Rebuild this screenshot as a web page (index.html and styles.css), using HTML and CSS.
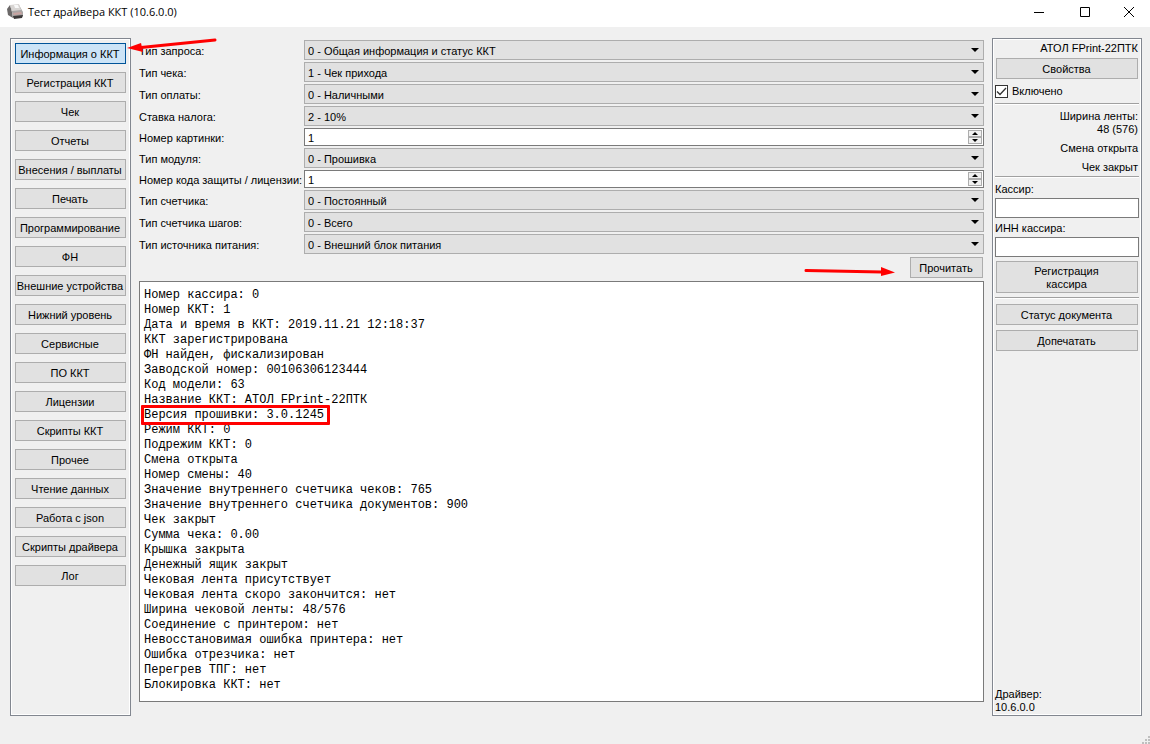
FILE: index.html
```html
<!DOCTYPE html>
<html lang="ru">
<head>
<meta charset="utf-8">
<title>Тест драйвера ККТ (10.6.0.0)</title>
<link rel="stylesheet" href="styles.css">
</head>
<body>
<div class="window">
  <header class="titlebar">
    <svg class="app-icon" width="17" height="16" viewBox="0 0 17 16" aria-hidden="true">
      <path d="M0 5L3 1L5 8L6 14L1 11Z" fill="#6b6868"/>
      <path d="M3 1L12 1L16 8L16 12L14 14L6 14L5 8Z" fill="#aaa6a5"/>
      <path d="M3 1L12 0L14 6L5 7Z" fill="#d8d5d3"/>
      <path d="M7 1L11 1L12 4L8 4Z" fill="#f8f8f8"/>
      <path d="M6 9L14 8L15 10L7 11Z" fill="#c9a3a1"/>
      <path d="M6 12L16 11L15 14L7 15Z" fill="#3c3939"/>
    </svg>
    <h1 class="title">Тест драйвера ККТ (10.6.0.0)</h1>
    <div class="caption">
      <button type="button" class="caption-btn" aria-label="Свернуть"><svg width="12" height="12" viewBox="0 0 12 12"><path d="M1 6.5h10" stroke="#000" fill="none"/></svg></button>
      <button type="button" class="caption-btn" aria-label="Развернуть"><svg width="12" height="12" viewBox="0 0 12 12"><path d="M1.5 1.5h9v9h-9z" stroke="#000" fill="none"/></svg></button>
      <button type="button" class="caption-btn" aria-label="Закрыть"><svg width="12" height="12" viewBox="0 0 12 12"><path d="M1 1l10 10M11 1L1 11" stroke="#000" fill="none"/></svg></button>
    </div>
  </header>

  <main class="content">
    <nav class="panel nav">
      <button type="button" class="btn btn-active">Информация о ККТ</button>
      <button type="button" class="btn">Регистрация ККТ</button>
      <button type="button" class="btn">Чек</button>
      <button type="button" class="btn">Отчеты</button>
      <button type="button" class="btn">Внесения / выплаты</button>
      <button type="button" class="btn">Печать</button>
      <button type="button" class="btn">Программирование</button>
      <button type="button" class="btn">ФН</button>
      <button type="button" class="btn">Внешние устройства</button>
      <button type="button" class="btn">Нижний уровень</button>
      <button type="button" class="btn">Сервисные</button>
      <button type="button" class="btn">ПО ККТ</button>
      <button type="button" class="btn">Лицензии</button>
      <button type="button" class="btn">Скрипты ККТ</button>
      <button type="button" class="btn">Прочее</button>
      <button type="button" class="btn">Чтение данных</button>
      <button type="button" class="btn">Работа с json</button>
      <button type="button" class="btn">Скрипты драйвера</button>
      <button type="button" class="btn">Лог</button>
    </nav>

    <section class="center">
      <form class="form">
        <label for="f1">Тип запроса:</label>
        <div class="combo"><select id="f1"><option>0 - Общая информация и статус ККТ</option></select></div>
        <label for="f2">Тип чека:</label>
        <div class="combo"><select id="f2"><option>1 - Чек прихода</option></select></div>
        <label for="f3">Тип оплаты:</label>
        <div class="combo"><select id="f3"><option>0 - Наличными</option></select></div>
        <label for="f4">Ставка налога:</label>
        <div class="combo"><select id="f4"><option>2 - 10%</option></select></div>
        <label for="f5">Номер картинки:</label>
        <div class="spin"><input id="f5" type="number" value="1"><div class="steps"><button type="button" class="step step-up" aria-label="Больше"></button><button type="button" class="step step-down" aria-label="Меньше"></button></div></div>
        <label for="f6">Тип модуля:</label>
        <div class="combo"><select id="f6"><option>0 - Прошивка</option></select></div>
        <label for="f7">Номер кода защиты / лицензии:</label>
        <div class="spin"><input id="f7" type="number" value="1"><div class="steps"><button type="button" class="step step-up" aria-label="Больше"></button><button type="button" class="step step-down" aria-label="Меньше"></button></div></div>
        <label for="f8">Тип счетчика:</label>
        <div class="combo"><select id="f8"><option>0 - Постоянный</option></select></div>
        <label for="f9">Тип счетчика шагов:</label>
        <div class="combo"><select id="f9"><option>0 - Всего</option></select></div>
        <label for="f10">Тип источника питания:</label>
        <div class="combo"><select id="f10"><option>0 - Внешний блок питания</option></select></div>
      </form>
      <div class="actions">
        <button type="button" class="btn read">Прочитать</button>
        <svg class="read-arrow" width="92" height="12" viewBox="0 0 92 12" aria-hidden="true"><path d="M2 4.500L78 6" stroke="#f00" stroke-width="3" stroke-linecap="round"/><path d="M77 1L91 6.500L77 10Z" fill="#f00"/></svg>
      </div>
      <div class="log">
        <textarea readonly aria-label="Результат" spellcheck="false">Номер кассира: 0
Номер ККТ: 1
Дата и время в ККТ: 2019.11.21 12:18:37
ККТ зарегистрирована
ФН найден, фискализирован
Заводской номер: 00106306123444
Код модели: 63
Название ККТ: АТОЛ FPrint-22ПТК
Версия прошивки: 3.0.1245
Режим ККТ: 0
Подрежим ККТ: 0
Смена открыта
Номер смены: 40
Значение внутреннего счетчика чеков: 765
Значение внутреннего счетчика документов: 900
Чек закрыт
Сумма чека: 0.00
Крышка закрыта
Денежный ящик закрыт
Чековая лента присутствует
Чековая лента скоро закончится: нет
Ширина чековой ленты: 48/576
Соединение с принтером: нет
Невосстановимая ошибка принтера: нет
Ошибка отрезчика: нет
Перегрев ТПГ: нет
Блокировка ККТ: нет</textarea>
        <div class="highlight"></div>
      </div>
    </section>

    <aside class="panel side">
      <p class="right">АТОЛ FPrint-22ПТК</p>
      <button type="button" class="btn inset props">Свойства</button>
      <label class="check"><input type="checkbox" checked><svg width="13" height="13" viewBox="0 0 13 13" aria-hidden="true"><path d="M2 6.500L5 9.500L11 3" fill="none" stroke="#333" stroke-width="1.300"/></svg>Включено</label>
      <hr>
      <p class="right tape">Ширина ленты:<br>48 (576)</p>
      <p class="right state">Смена открыта</p>
      <p class="right state">Чек закрыт</p>
      <hr class="tight">
      <label class="field-label" for="cashier">Кассир:</label>
      <input class="text" id="cashier" type="text">
      <label class="field-label" for="inn">ИНН кассира:</label>
      <input class="text" id="inn" type="text">
      <button type="button" class="btn inset tall">Регистрация<br>кассира</button>
      <hr>
      <button type="button" class="btn inset status">Статус документа</button>
      <button type="button" class="btn inset print">Допечатать</button>
      <p class="driver">Драйвер:<br>10.6.0.0</p>
    </aside>
  </main>

  <svg class="nav-arrow" width="92" height="20" viewBox="0 0 92 20" aria-hidden="true"><path d="M14 12.500L88 5" stroke="#f00" stroke-width="3" stroke-linecap="round"/><path d="M0 13L14 8L16 17Z" fill="#f00"/></svg>
  <svg class="grip" width="8" height="8" viewBox="0 0 8 8" aria-hidden="true"><path d="M6 0h2v2h-2zM3 3h2v2h-2zM6 3h2v2h-2zM0 6h2v2h-2zM3 6h2v2h-2zM6 6h2v2h-2z" fill="#bfbfbf"/></svg>
</div>
</body>
</html>
```

FILE: styles.css
```css
* { box-sizing: border-box; }
body {
  margin: 0;
  background: #f0f0f0;
  color: #000;
  font: 11px/13px "Liberation Sans", Arial, sans-serif;
}
button, input, select { font: inherit; color: inherit; margin: 0; }
p { margin: 0; }
.window { position: relative; display: flex; flex-direction: column; min-height: 100vh; }

.titlebar { display: flex; align-items: center; height: 27px; padding-left: 7px; background: #fff; }
.app-icon { margin-bottom: 4px; }
.title { margin: 0 0 4px 4px; font: 11px/16px "Open Sans", sans-serif; }
.caption { display: flex; margin: 0 0 4px auto; }
.caption-btn { display: flex; align-items: center; justify-content: center; width: 46px; height: 23px; padding: 0; border: 0; background: none; }
.caption-btn:last-child { width: 42px; }

.content { display: flex; flex: 1; gap: 8px; padding: 11px 8px 28px 10px; }
.panel { display: flex; flex-direction: column; border: 1px solid #828790; box-shadow: inset 0 0 0 1px #fff; }
.btn { height: 21px; padding: 1px 1px 0 0; border: 1px solid #adadad; background: #e1e1e1; white-space: nowrap; }
.nav { gap: 8px; width: 121px; padding: 4px; }
.btn-active { border: 1px solid #005499; background: #cce4f7; }

.center { display: flex; flex: 1; flex-direction: column; min-width: 0; padding: 2px 0 14px; }
.form { display: grid; grid-template-columns: 165px 1fr; row-gap: 2px; align-items: center; }
.form label { padding-top: 2px; white-space: nowrap; }
.combo { position: relative; height: 20px; }
.combo select { width: 100%; height: 20px; padding: 2px 20px 0 3px; border: 1px solid #adadad; border-radius: 0; background: #e1e1e1; appearance: none; }
.combo::after { content: ""; position: absolute; top: 8px; right: 5px; border: 4px solid transparent; border-top-color: #000; border-bottom: 0; pointer-events: none; }
.spin { display: flex; height: 18px; border: 1px solid #7a7a7a; background: #fff; }
.spin input { flex: 1; min-width: 0; padding: 2px 3px 0; border: 0; background: none; appearance: textfield; }
.spin input::-webkit-inner-spin-button { appearance: none; margin: 0; }
.steps { display: flex; flex-direction: column; width: 14px; margin: 1px; }
.step { display: flex; align-items: center; justify-content: center; flex: 1; padding: 0; border: 1px solid #adadad; background: #f0f0f0; }
.step::after { content: ""; border: 3px solid transparent; }
.step-up::after { border-bottom-color: #000; border-top: 0; }
.step-down::after { border-top-color: #000; border-bottom: 0; }
.actions { position: relative; display: flex; justify-content: flex-end; padding: 3px 1px; }
.read { width: 73px; }
.read-arrow { position: absolute; top: 12px; right: 88px; }
.log { position: relative; display: flex; flex: 1; }
.log textarea { flex: 1; padding: 6px 4px; border: 1px solid #7a7a7a; border-radius: 0; background: #fff; color: #000; font: 12px/15px "Liberation Mono", monospace; resize: none; outline: 0; }
.highlight { position: absolute; top: 124px; left: 2px; width: 189px; height: 20px; border: 3px solid #f00; border-radius: 1px; }

.side { width: 150px; padding: 3px 2px 1px; }
.right { padding-right: 1px; text-align: right; }
.inset { margin: 0 1px; }
.props { margin-top: 3px; }
.check { position: relative; display: flex; align-items: center; gap: 4px; margin: 6px 0 5px; }
.check input { width: 13px; height: 13px; margin: 0; border: 1px solid #333; background: #fff; appearance: none; }
.check svg { position: absolute; top: 0; left: 0; }
hr { width: 100%; margin: 0; border: 0; border-top: 1px solid #a0a0a0; border-bottom: 1px solid #fff; }
.tape { margin-top: 5px; }
.state { margin-top: 6px; }
.tight { margin: 2px 0 1px; }
.field-label { margin: 4px 0 2px; }
.text { width: 100%; height: 20px; padding: 0 3px; border: 1px solid #7a7a7a; background: #fff; }
.tall { height: 32px; margin: 4px 1px; }
.status { margin-top: 5px; }
.print { margin-top: 5px; }
.driver { margin-top: auto; }

.nav-arrow { position: absolute; top: 35px; left: 127px; }
.grip { position: absolute; right: 0; bottom: 0; }
```
